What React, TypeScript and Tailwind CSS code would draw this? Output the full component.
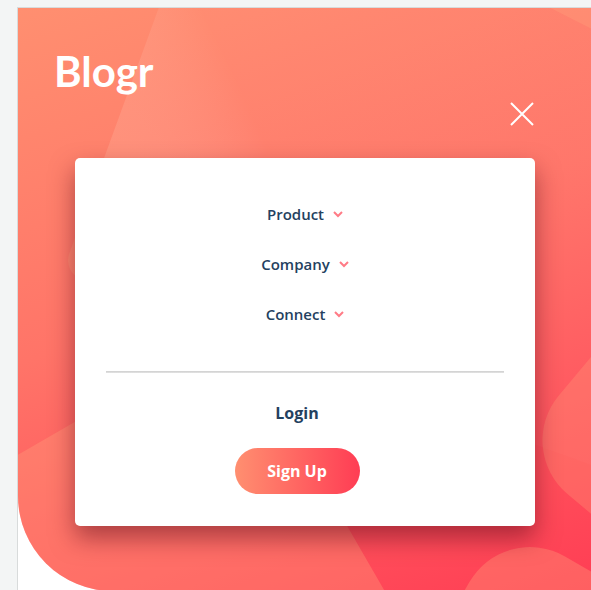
import React from "react";

function Chevron() {
  return (
    <svg width="10" height="7" viewBox="0 0 10 7" fill="none" className="mt-[1px]">
      <path d="M1 1l4 4 4-4" stroke="#FF7B86" strokeWidth="2" />
    </svg>
  );
}

function NavItem({ label }: { label: string }) {
  return (
    <div className="flex items-center justify-center gap-[9px] text-[15px] leading-6 font-semibold text-[#24415f]">
      <span>{label}</span>
      <Chevron />
    </div>
  );
}

type Shape = { cx: number; cy: number; s: number; r: number; a: number; fill: string; op: number };

const shapes: Shape[] = [
  { cx: 124.5, cy: 663.5, s: 500, r: 100, a: -30, fill: "#ffa07c", op: 0.35 },
  { cx: 679, cy: 425, s: 260, r: 70, a: 40, fill: "#ffa07c", op: 0.3 },
  { cx: 534, cy: 691, s: 260, r: 70, a: 30, fill: "#ffa07c", op: 0.35 },
  { cx: 600, cy: -134, s: 300, r: 60, a: 27, fill: "#ffa07c", op: 0.35 },
];

function Pattern() {
  return (
    <svg
      className="pointer-events-none absolute inset-0 h-full w-full"
      viewBox="0 0 573 583"
      preserveAspectRatio="none"
    >
      <defs>
        <linearGradient id="fadeE" gradientUnits="userSpaceOnUse" x1="200" y1="120" x2="45" y2="280">
          <stop offset="0" stopColor="#ffffff" stopOpacity="0.02" />
          <stop offset="1" stopColor="#ffa07c" stopOpacity="0.35" />
        </linearGradient>
      </defs>
      <rect
        x={429 - 300}
        y={85 - 300}
        width={600}
        height={600}
        rx={20}
        transform="rotate(20 429 85)"
        fill="url(#fadeE)"
      />
      {shapes.map((p, i) => (
        <rect
          key={i}
          x={p.cx - p.s / 2}
          y={p.cy - p.s / 2}
          width={p.s}
          height={p.s}
          rx={p.r}
          transform={`rotate(${p.a} ${p.cx} ${p.cy})`}
          fill={p.fill}
          fillOpacity={p.op}
        />
      ))}
    </svg>
  );
}

export default function App() {
  return (
    <div
      className="h-[590px] w-full overflow-hidden bg-[#f3f5f5] pl-[17px] pt-[7px]"
      style={{ fontFamily: '"Open Sans", "Liberation Sans", sans-serif' }}
    >
      <div className="h-[620px] border-l border-t border-[#d8dbdb] bg-white">
        <header className="relative h-[583px] overflow-hidden rounded-bl-[95px] bg-[linear-gradient(160deg,#ff8f70_0%,#ff7468_45%,#ff3d54_100%)]">
          <Pattern />

          <div className="relative">
            <div className="pl-[36px] pr-[57px] pt-[39px]">
              <div
                className="text-[42px] font-bold leading-[48px] text-white"
                style={{ fontFamily: 'Lato, "Open Sans", sans-serif' }}
              >
                Blogr
              </div>
              <div className="mt-[7px] flex justify-end">
                <svg width="24" height="24" viewBox="0 0 24 24" fill="none">
                  <path d="M1 1L23 23M23 1L1 23" stroke="#ffffff" strokeWidth="2" />
                </svg>
              </div>
            </div>

            <div className="ml-[57px] mt-[32px] w-[460px] rounded-[5px] bg-white px-[31px] pb-[32px] pt-[44px] shadow-[0_12px_24px_rgba(90,10,25,0.5)]">
              <div className="flex flex-col gap-[26px]">
                <NavItem label="Product" />
                <NavItem label="Company" />
                <NavItem label="Connect" />
              </div>
              <div className="mt-[45px] h-[2px] bg-[linear-gradient(#cfcfcf,#e4e4e4)]" />
              <div className="flex flex-col items-center pr-[16px]">
                <div className="mt-[28px] text-[16px] font-bold leading-6 text-[#24415f]">Login</div>
                <button className="mt-[23px] flex h-[46px] w-[125px] items-center justify-center rounded-full bg-[linear-gradient(to_right,#ff8f70,#ff3d54)] text-[16px] font-bold text-white">
                  Sign Up
                </button>
              </div>
            </div>
          </div>
        </header>
      </div>
    </div>
  );
}
